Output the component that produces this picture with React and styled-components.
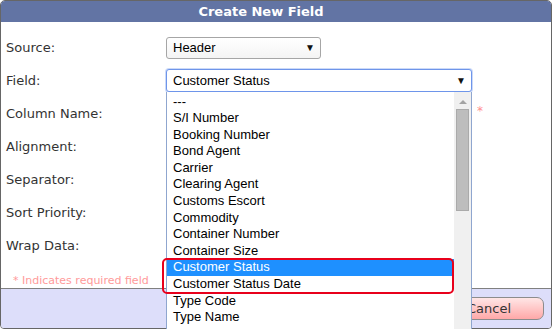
import React from 'react'
import styled, { createGlobalStyle } from 'styled-components'

const Global = createGlobalStyle`
    html, body {
        margin: 0;
        padding: 0;
        overflow: hidden;
        background: #fff;
    }
`

const Dialog = styled.section`
    width: 552px;
    height: 329px;
    box-sizing: border-box;
    border: 1px solid #666;
    border-radius: 5px 5px 4px 4px;
    background: #fff;
    display: flex;
    flex-direction: column;
    font-family: "DejaVu Sans", Verdana, sans-serif;
`

const Title = styled.header`
    height: 21px;
    background: #6274a4;
    border-radius: 4px 4px 0 0;
    color: #fff;
    font-weight: bold;
    font-size: 13px;
    display: flex;
    align-items: center;
    justify-content: center;
    padding-right: 30px;
`

const Body = styled.div`
    flex: 1;
    padding: 9px 0 0 5px;
    display: flex;
    flex-direction: column;
`

const Row = styled.div`
    display: grid;
    grid-template-columns: 160px auto 1fr;
    align-items: center;
    height: 33px;
`

const Label = styled.span`
    font-size: 13px;
    color: #333;
`

const SelectWrap = styled.div`
    position: relative;
    width: ${p => p.width}px;
`

const Select = styled.div`
    box-sizing: border-box;
    height: ${p => p.focused ? 23 : 22}px;
    border: 1px solid ${p => p.focused ? '#6e95ea' : '#a6a6a6'};
    border-radius: 3px;
    background: ${p => p.focused ? '#fff' : 'linear-gradient(#fff, #f4f4f4)'};
    box-shadow: ${p => p.focused ? '0 0 0 1px rgba(110,149,234,0.35)' : 'none'};
    display: flex;
    align-items: center;
    justify-content: space-between;
    padding: 0 5px 0 6px;
    font-family: "Liberation Sans", Arial, sans-serif;
    font-size: 13px;
    color: #000;
`

const Arrow = styled.span`
    font-size: 10px;
    color: #111;
`

const Input = styled.div`
    box-sizing: border-box;
    width: 305px;
    height: 21px;
    border: 1px solid #a6a6a6;
    border-radius: 2px;
`

const Required = styled.span`
    color: #ff8f8f;
    font-size: 12px;
    margin-left: 6px;
    margin-top: -6px;
`

const List = styled.div`
    position: absolute;
    top: 100%;
    left: 0;
    width: 306px;
    box-sizing: border-box;
    border: 1px solid #8fa6cf;
    border-top: none;
    background: #fff;
    display: flex;
    z-index: 5;
`

const Items = styled.ul`
    flex: 1;
    margin: 0;
    padding: 1.5px 0 0;
    list-style: none;
    font-family: "Liberation Sans", Arial, sans-serif;
    font-size: 13px;
    color: #000;
`

const Item = styled.li`
    height: 16.6px;
    line-height: 16.6px;
    padding-left: 6px;
    white-space: nowrap;
    background: ${p => p.selected ? '#1e90ff' : 'transparent'};
    color: ${p => p.selected ? '#fff' : '#000'};
`

const Marked = styled.div`
    position: relative;

    &::after {
        content: "";
        position: absolute;
        inset: -1px 0 -1px -5px;
        border: 2px solid #e8001b;
        border-radius: 5px;
        pointer-events: none;
    }
`

const Scrollbar = styled.div`
    width: 17px;
    background: #f0f0f0;
    display: flex;
    flex-direction: column;
    align-items: center;
    padding-top: 8px;
    gap: 5px;
`

const UpArrow = styled.span`
    width: 0;
    height: 0;
    border-left: 4px solid transparent;
    border-right: 4px solid transparent;
    border-bottom: 4px solid #a3a3a3;
`

const Thumb = styled.span`
    width: 13px;
    height: 102px;
    box-sizing: border-box;
    background: #bdbdbd;
    border: 1px solid #aaa;
`

const Note = styled.p`
    margin: 0;
    padding: 12px 0 0 7px;
    font-size: 11px;
    color: #ff9a9a;
`

const Footer = styled.footer`
    height: 40px;
    box-sizing: border-box;
    background: #dddefa;
    border-top: 1px solid #808080;
    border-radius: 0 0 3px 3px;
    display: flex;
    justify-content: flex-end;
    align-items: flex-start;
    gap: 6px;
    padding: 8px 7px 0 0;
`

const Button = styled.button`
    width: 110px;
    height: 23px;
    border: 1px solid #8c8c8c;
    border-radius: 7px;
    background: ${p => p.cancel ? 'linear-gradient(#ffe6e6, #ffa8a8)' : 'linear-gradient(#e6ffe6, #a8e8a8)'};
    font-family: "DejaVu Sans", Verdana, sans-serif;
    font-size: 13px;
    color: #333;
    padding: 0;
`

const fields = [
    '---', 'S/I Number', 'Booking Number', 'Bond Agent', 'Carrier', 'Clearing Agent',
    'Customs Escort', 'Commodity', 'Container Number', 'Container Size',
]

const after = ['Type Code', 'Type Name', 'Type Details']

export default function App() {
    return (
        <>
            <Global />
            <Dialog>
                <Title>Create New Field</Title>
                <Body>
                    <Row>
                        <Label>Source:</Label>
                        <SelectWrap width={155}>
                            <Select>Header<Arrow>▼</Arrow></Select>
                        </SelectWrap>
                    </Row>
                    <Row>
                        <Label>Field:</Label>
                        <SelectWrap width={306}>
                            <Select focused>Customer Status<Arrow>▼</Arrow></Select>
                            <List>
                                <Items>
                                    {fields.map(f => <Item key={f}>{f}</Item>)}
                                    <Marked>
                                        <Item selected>Customer Status</Item>
                                        <Item>Customer Status Date</Item>
                                    </Marked>
                                    {after.map(f => <Item key={f}>{f}</Item>)}
                                </Items>
                                <Scrollbar>
                                    <UpArrow />
                                    <Thumb />
                                </Scrollbar>
                            </List>
                        </SelectWrap>
                    </Row>
                    <Row>
                        <Label>Column Name:</Label>
                        <Input />
                        <Required>*</Required>
                    </Row>
                    <Row>
                        <Label>Alignment:</Label>
                        <Input />
                    </Row>
                    <Row>
                        <Label>Separator:</Label>
                        <Input />
                    </Row>
                    <Row>
                        <Label>Sort Priority:</Label>
                        <Input />
                    </Row>
                    <Row>
                        <Label>Wrap Data:</Label>
                        <Input />
                    </Row>
                    <Note>* Indicates required field</Note>
                </Body>
                <Footer>
                    <Button>Save</Button>
                    <Button cancel>Cancel</Button>
                </Footer>
            </Dialog>
        </>
    )
}
